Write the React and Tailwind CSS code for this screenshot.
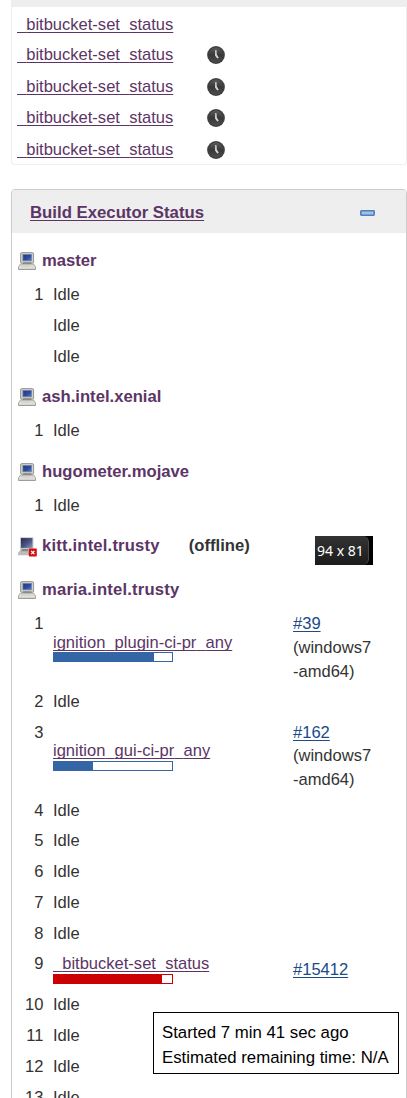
import React from "react";

const linkBase = "underline decoration-1 underline-offset-2 [text-decoration-skip-ink:none]";

function Clock() {
  return (
    <svg className="mt-[3px] block h-[18px] w-[18px]" viewBox="0 0 18 18">
      <defs>
        <linearGradient id="clockFace" x1="0" y1="0" x2="0" y2="1">
          <stop offset="0" stopColor="#5a5a5a" />
          <stop offset="0.5" stopColor="#383838" />
          <stop offset="1" stopColor="#4c4c4c" />
        </linearGradient>
      </defs>
      <circle cx="9" cy="9" r="8.9" fill="#3e3e3e" />
      <circle cx="9" cy="9" r="7.4" fill="url(#clockFace)" />
      <path d="M8.2 4 L9.5 4 L9.8 8.6 L11.8 11.8 L10.2 12.6 L8 9.5 Z" fill="#d4d4d4" />
    </svg>
  );
}

function Computer() {
  return (
    <svg className="mt-[3px] block h-[18px] w-[18px] shrink-0" viewBox="0 0 18 18">
      <defs>
        <linearGradient id="screen" x1="0" y1="0" x2="1" y2="1">
          <stop offset="0" stopColor="#1d3a7c" />
          <stop offset="0.55" stopColor="#2b4ca4" />
          <stop offset="1" stopColor="#5b7cc4" />
        </linearGradient>
      </defs>
      <rect x="2.6" y="0.6" width="13" height="10.8" rx="1.4" fill="#cfcfcb" stroke="#979792" />
      <rect x="4.9" y="2.4" width="8.6" height="6.4" fill="url(#screen)" stroke="#7583a3" strokeWidth="0.7" />
      <path d="M5 10.4h8.4v1.4H5z" fill="#77776f" />
      <path d="M2.3 12.2h13.5l1.7 2.8v2.4H.5V15z" fill="#e0e0dc" stroke="#a8a8a3" />
      <path d="M3.2 14h9.2M13.6 14h1.6" stroke="#c6c6c1" strokeWidth="0.9" />
      <path d="M.5 17.4h17" stroke="#9c9c97" />
    </svg>
  );
}

function ComputerOffline() {
  return (
    <svg className="mt-[3px] block h-5 w-5 shrink-0" viewBox="0 0 20 20">
      <defs>
        <linearGradient id="offScreen" x1="0" y1="0" x2="1" y2="1">
          <stop offset="0" stopColor="#242b52" />
          <stop offset="0.55" stopColor="#4c5684" />
          <stop offset="1" stopColor="#8f97b8" />
        </linearGradient>
      </defs>
      <rect x="2" y="0.2" width="13.4" height="12" rx="1" fill="#c4c4ca" />
      <rect x="3" y="1.1" width="11.4" height="9.8" fill="url(#offScreen)" />
      <path d="M3 12h11l2.5 3v3.3H0V16z" fill="#bcbcbc" />
      <path d="M4 12h6v2.2H3.2z" fill="#888" />
      <rect x="10.8" y="11.6" width="8" height="8" rx="0.8" fill="#d40d12" />
      <path d="M13.2 14l3.2 3.2M16.4 14l-3.2 3.2" stroke="#fff" strokeWidth="1.2" />
    </svg>
  );
}

const queue = [
  { h: "h-[30px]", clock: false },
  { h: "h-[32px]", clock: true },
  { h: "h-[31px]", clock: true },
  { h: "h-[32px]", clock: true },
  { h: "h-[27px]", clock: true },
];

/* Underscores blend into the link's underline. */
function JobLink({ name }) {
  return (
    <a className={`text-[#5c3566] decoration-[#5c3566] ${linkBase}`}>
      {name.split(/(_)/).map((part, i) =>
        part === "_" ? (
          <span key={i} className="text-transparent">_</span>
        ) : (
          part
        )
      )}
    </a>
  );
}

function NodeRow({ name, h, offline, wide }) {
  return (
    <div className={`flex pl-1.5 font-bold text-[16.65px] ${h}`}>
      {offline ? <ComputerOffline /> : <Computer />}
      <a className={`${offline ? "ml-1" : "ml-1.5"} ${wide ? "tracking-[0.18px]" : ""} text-[#5c3566]`}>{name}</a>
      {offline && <span className="ml-[29px]">(offline)</span>}
    </div>
  );
}

function Row({ n, h = "h-[31px]", children, side }) {
  return (
    <div className={`flex ${h}`}>
      <div className="w-[31.5px] shrink-0 text-right">{n}</div>
      <div className="ml-[9.5px] w-60 shrink-0">{children || "Idle"}</div>
      {side}
    </div>
  );
}

function Bar({ value, red }) {
  return (
    <div className={`flex h-2.5 w-[120px] border bg-white ${red ? "border-[#cc0000]" : "border-[#3465a4]"}`}>
      <div className={red ? "bg-[#cc0000]" : "bg-[#3465a4]"} style={{ width: value }} />
    </div>
  );
}

function Side({ build, tight }) {
  return (
    <div>
      <div className={tight ? "h-[23px]" : "h-6"}>
        <a className={`text-[#204a87] ${linkBase}`}>{build}</a>
      </div>
      <div>(windows7</div>
      <div>-amd64)</div>
    </div>
  );
}

export default function App() {
  return (
    <div className="relative h-[1098px] w-[407px] overflow-hidden bg-white font-['Liberation_Sans',Arial,sans-serif] text-[16.55px] leading-6 text-[#333] whitespace-nowrap">
      <section className="ml-[11px] h-[165px] w-[396px] overflow-hidden rounded-b border border-t-0 border-[#eee]">
        <div className="h-[7px] bg-[#eee]" />
        <div className="pt-[6px] pl-[5px]">
          {queue.map((q, i) => (
            <div key={i} className={`flex ${q.h}`}>
              <div className="w-[190px]">
                <JobLink name="_bitbucket-set_status" />
              </div>
              {q.clock && <Clock />}
            </div>
          ))}
        </div>
      </section>

      <section className="mt-6 ml-[11px] h-[1000px] w-[396px] overflow-hidden rounded border border-[#ccc]">
        <header className="flex h-[43px] items-center justify-between bg-[#eee] pt-[2px] pr-[31px] pl-[18px]">
          <a className={`text-[16.75px] font-bold text-[#5c3566] ${linkBase}`}>Build Executor Status</a>
          <svg className="mt-px block h-[6px] w-[15px]" viewBox="0 0 15 6">
            <rect x="0.8" y="0.8" width="13.4" height="4.4" rx="0.6" fill="#a2c0e3" stroke="#4f7fbd" strokeWidth="1.6" />
          </svg>
        </header>
        <div className="pt-4">
          <NodeRow name="master" h="h-[34px]" />
          <Row n="1" />
          <Row />
          <Row h="h-10" />
          <NodeRow name="ash.intel.xenial" h="h-[34px]" />
          <Row n="1" h="h-[41px]" />
          <NodeRow name="hugometer.mojave" h="h-[34px]" />
          <Row n="1" h="h-10" />
          <NodeRow name="kitt.intel.trusty" h="h-11" offline wide />
          <NodeRow name="maria.intel.trusty" h="h-[34px]" wide />
          <Row n="1" h="h-[78px]" side={<Side build="#39" />}>
            <div className="h-10 pt-[19px]">
              <JobLink name="ignition_plugin-ci-pr_any" />
            </div>
            <Bar value="100px" />
          </Row>
          <Row n="2" />
          <Row n="3" h="h-[78px]" side={<Side build="#162" tight />}>
            <div className="h-10 pt-[18px]">
              <JobLink name="ignition_gui-ci-pr_any" />
            </div>
            <Bar value="39px" />
          </Row>
          <Row n="4" h="h-[30px]" />
          <Row n="5" />
          <Row n="6" />
          <Row n="7" />
          <Row n="8" h="h-[30px]" />
          <Row
            n="9"
            h="h-[41px]"
            side={
              <div className="pt-1.5">
                <a className={`text-[#204a87] ${linkBase}`}>#15412</a>
              </div>
            }
          >
            <div className="h-[22px]">
              <JobLink name="_bitbucket-set_status" />
            </div>
            <Bar value="108px" red />
          </Row>
          <Row n="10" />
          <Row n="11" />
          <Row n="12" />
          <Row n="13" />
        </div>
      </section>

      <div className="absolute top-[536px] left-[315px] h-[29px] w-[58px] bg-black">
        <div className="h-[29px] w-[54px] rounded-r-md border-r border-[#4a4a4a] bg-gradient-to-b from-[#333] to-[#1c1c1c] pt-[3px] pl-0.5 font-['Noto_Sans',sans-serif] text-[14px] leading-6 text-white">
          94 x 81
        </div>
      </div>

      <div className="absolute top-[1012px] left-[153px] h-[62px] w-[246px] border border-black bg-white pt-[7px] pl-2 text-[16.8px] leading-[25px] text-black">
        <div>Started 7 min 41 sec ago</div>
        <div>Estimated remaining time: N/A</div>
      </div>
    </div>
  );
}
